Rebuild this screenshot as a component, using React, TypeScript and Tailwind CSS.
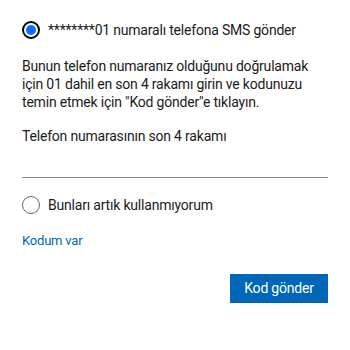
export default function App() {
  return (
    <main className="w-[350px] h-[350px] bg-white px-[22px] pt-5 text-[#1b1b1b] font-['Roboto',sans-serif] tracking-[-0.2px]">
      <label className="flex items-center h-5">
        <span className="w-[18px] h-[18px] rounded-full border-2 border-black flex items-center justify-center">
          <span className="w-[10px] h-[10px] rounded-full bg-[#0a6cff]" />
        </span>
        <span className="ml-[8px] text-[14px] leading-5">********01 numaralı telefona SMS gönder</span>
      </label>

      <p className="mt-[17px] text-[14px] leading-[18px]">
        Bunun telefon numaranız olduğunu doğrulamak için 01 dahil en son 4 rakamı girin ve kodunuzu temin etmek için "Kod gönder"e tıklayın.
      </p>

      <div className="mt-4 text-[14px] leading-[18px]">Telefon numarasının son 4 rakamı</div>
      <div className="h-[33px] border-b border-[#8a8a8a]" />

      <label className="mt-[17px] flex items-center h-5">
        <span className="w-[18px] h-[18px] rounded-full border border-[#666]" />
        <span className="ml-[8px] text-[14px] leading-5">Bunları artık kullanmıyorum</span>
      </label>

      <div className="mt-[17px] text-[13px] leading-[18px] text-[#0067b8]">Kodum var</div>

      <div className="mt-6 flex justify-end">
        <button className="h-[29px] w-[98px] bg-[#0067b8] text-white text-[14px]">Kod gönder</button>
      </div>
    </main>
  )
}
